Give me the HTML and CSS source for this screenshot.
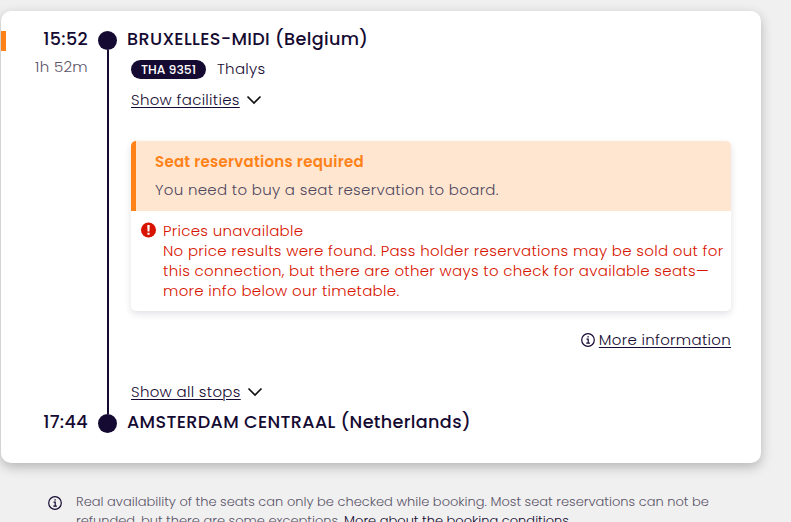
FILE: index.html
```
<!DOCTYPE html>
<html lang="en">
<head>
    <meta charset="UTF-8">
    <meta name="viewport" content="width=device-width, initial-scale=1.0">
    <title>Bruxelles-Midi to Amsterdam Centraal</title>
    <link rel="stylesheet" href="styles.css">
</head>
<body>
    <section class="journey-card">
        <span class="journey-marker"></span>

        <div class="times">
            <div>
                <div class="time">15:52</div>
                <div class="duration">1h 52m</div>
            </div>
            <div class="time">17:44</div>
        </div>

        <div class="rail">
            <span class="rail-dot"></span>
            <span class="rail-line"></span>
            <span class="rail-dot"></span>
        </div>

        <div class="details">
            <h2 class="station">BRUXELLES-MIDI (Belgium)</h2>

            <div class="leg">
                <div class="train">
                    <span class="train-badge">THA 9351</span>
                    <span class="train-name">Thalys</span>
                </div>

                <div class="toggle">
                    <a class="link">Show facilities</a>
                    <svg class="chevron" viewBox="0 0 16 10"><path d="M1.500 1.500 8 8l6.500-6.500"/></svg>
                </div>

                <div class="notice">
                    <div class="notice-warning">
                        <h3 class="notice-title">Seat reservations required</h3>
                        <p class="notice-text">You need to buy a seat reservation to board.</p>
                    </div>
                    <div class="notice-error">
                        <svg class="error-icon" viewBox="0 0 16 16">
                            <circle cx="8" cy="8" r="8" fill="#d81400"/>
                            <path d="M6.700 2.600h2.600l-.3 7H7zM6.800 10.800h2.400v2.300H6.800z" fill="#fff"/>
                        </svg>
                        <p>
                            Prices unavailable<br>
                            No price results were found. Pass holder reservations may be sold out for<br>
                            this connection, but there are other ways to check for available seats—<br>
                            more info below our timetable.
                        </p>
                    </div>
                </div>

                <div class="more">
                    <svg class="info-icon" viewBox="0 0 14 14">
                        <circle cx="7" cy="7" r="6.300"/>
                        <path d="M5.500 6.100h1.700v4M5.300 10.200h3.600M6.400 3.800h1.400"/>
                    </svg>
                    <a class="link">More information</a>
                </div>

                <div class="toggle stops">
                    <a class="link">Show all stops</a>
                    <svg class="chevron" viewBox="0 0 16 10"><path d="M1.500 1.500 8 8l6.500-6.500"/></svg>
                </div>
            </div>

            <h2 class="station">AMSTERDAM CENTRAAL (Netherlands)</h2>
        </div>
    </section>

    <footer class="disclaimer">
        <svg class="info-icon" viewBox="0 0 14 14">
            <circle cx="7" cy="7" r="6.300"/>
            <path d="M5.500 6.100h1.700v4M5.300 10.200h3.600M6.400 3.800h1.400"/>
        </svg>
        <p>
            Real availability of the seats can only be checked while booking. Most seat reservations can not be<br>
            refunded, but there are some exceptions. <a class="conditions">More about the booking conditions.</a>
        </p>
    </footer>
</body>
</html>
```
FILE: styles.css
```
* {
    margin: 0;
    padding: 0;
    box-sizing: border-box;
}

body {
    font-family: Poppins, Inter, "Liberation Sans", sans-serif;
    font-size: 15px;
    font-weight: 300;
    line-height: 20px;
    letter-spacing: 0.3px;
    color: #150a31;
    background: #f0f0f0;
    padding: 11px 30px 0 1px;
    height: 522px;
    overflow: hidden;
    white-space: nowrap;
}

.journey-card {
    position: relative;
    display: flex;
    gap: 10px;
    height: 452px;
    padding: 17px 30px 30px 0;
    background: #fff;
    border-radius: 10px;
    box-shadow: 0 4px 12px rgba(0, 0, 0, 0.25);
}

/* orange tab on the card edge */
.journey-marker {
    position: absolute;
    left: 0;
    top: 20px;
    width: 5px;
    height: 20px;
    background: #ff8218;
}

.times {
    width: 87px;
    display: flex;
    flex-direction: column;
    justify-content: space-between;
    text-align: right;
}

.time,
.station {
    font-size: 17.6px;
    font-weight: 500;
    line-height: 22px;
    letter-spacing: 0.35px;
}

.duration {
    margin-top: 7px;
    color: #5b5468;
}

.rail {
    width: 19px;
    padding-top: 3px;
    display: flex;
    flex-direction: column;
    align-items: center;
}

.rail-dot {
    width: 19px;
    height: 19px;
    border-radius: 50%;
    background: #150a31;
}

.rail-line {
    flex: 1;
    width: 2px;
    background: #150a31;
}

.details {
    flex: 1;
    min-width: 0;
    display: flex;
    flex-direction: column;
    justify-content: space-between;
}

.leg {
    flex: 1;
    padding: 9px 0 0 4px;
}

.train {
    display: flex;
    align-items: center;
    height: 20px;
    gap: 11px;
}

.train-badge {
    width: 75px;
    height: 19px;
    border-radius: 10px;
    background: #150a31;
    color: #fff;
    font-size: 12.4px;
    font-weight: 500;
    line-height: 19px;
    letter-spacing: 0;
    text-align: center;
}

.toggle {
    display: flex;
    align-items: center;
    gap: 6.500px;
    height: 20px;
    margin-top: 11px;
}

.link {
    text-decoration: underline;
    text-decoration-thickness: 1px;
    text-underline-offset: 2px;
}

.chevron {
    width: 16px;
    height: 10px;
    fill: none;
    stroke: #111;
    stroke-width: 1.7;
}

.notice {
    margin-top: 31px;
    height: 170px;
    border-radius: 5px;
    overflow: hidden;
    box-shadow: 0 3px 7px rgba(21, 30, 60, 0.13);
}

.notice-warning {
    height: 70px;
    padding: 11px 0 0 19px;
    border-left: 5px solid #ff8218;
    background: #ffe6d1;
}

.notice-title {
    font-size: 15px;
    font-weight: 600;
    letter-spacing: 0.26px;
    color: #ff8218;
}

.notice-text {
    margin-top: 8px;
    color: #4f485f;
}

.notice-error {
    display: flex;
    gap: 7px;
    padding: 10px 0 0 10px;
    color: #d81400;
}

.error-icon {
    width: 15px;
    height: 16px;
    margin-top: 1px;
}

.more {
    display: flex;
    justify-content: flex-end;
    align-items: center;
    gap: 4px;
    height: 20px;
    margin-top: 19px;
}

.info-icon {
    flex: none;
    width: 14px;
    height: 14px;
    fill: none;
    stroke: #150a31;
    stroke-width: 1.2;
}

.stops {
    margin-top: 32px;
}

.disclaimer {
    display: flex;
    gap: 14px;
    padding: 29px 0 0 47px;
    font-size: 13px;
    line-height: 19px;
    letter-spacing: 0;
    color: #5b5468;
}

.disclaimer .info-icon {
    margin-top: 4px;
}

.conditions {
    color: #150a31;
}
```
